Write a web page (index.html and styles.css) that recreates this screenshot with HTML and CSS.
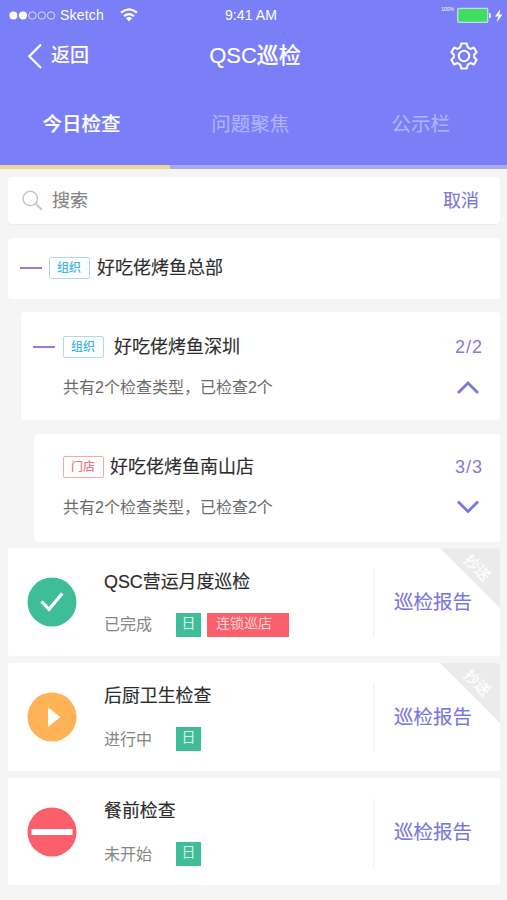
FILE: index.html
```html
<!DOCTYPE html>
<html lang="zh-CN">
<head>
<meta charset="utf-8">
<title>QSC巡检</title>
<link rel="stylesheet" href="styles.css">
</head>
<body>
<header class="header">
  <div class="status">
    <div class="carrier">
      <svg width="47" height="10" viewBox="0 0 47 10"><g fill="#fff"><circle cx="4.4" cy="5.5" r="4"/><circle cx="14" cy="5.5" r="4"/></g><g fill="none" stroke="#d9dafc" stroke-width="1"><circle cx="23.4" cy="5.5" r="3.7"/><circle cx="32.8" cy="5.5" r="3.7"/><circle cx="42" cy="5.5" r="3.7"/></g></svg>
      <span class="carrier-name">Sketch</span>
      <svg class="wifi" width="18" height="14" viewBox="0 0 18 14"><g fill="none" stroke="#fff" stroke-width="2.2"><path d="M1 4.7Q9-2 17 4.7"/><path d="M4 8.1Q9 4 14 8.1"/></g><path d="M5.9 10.3Q9 7.8 12.1 10.3L9 13.5Z" fill="#fff"/></svg>
    </div>
    <div class="clock">9:41 AM</div>
    <div class="power">
      <span class="percent">100%</span>
      <svg width="46" height="16" viewBox="0 0 46 16"><rect x="0.7" y="1.3" width="30" height="14" rx="1" fill="#42dc61" stroke="#c3d8f5" stroke-width="1.3"/><path d="M32 6h1.5q1 2.5 0 5H32Z" fill="#e8e9ff"/><path d="M43.4 2 38 9.5h3.3l-1.6 5.8L45.5 7.5h-3.3Z" fill="#fff"/></svg>
    </div>
  </div>
  <nav class="bar">
    <a class="back"><svg width="16" height="26" viewBox="0 0 16 26"><path d="M14 1.5 2.3 13.2 14 25" fill="none" stroke="#fff" stroke-width="2.2"/></svg><span>返回</span></a>
    <h1 class="title">QSC巡检</h1>
    <svg class="gear" width="28" height="28" viewBox="0 0 28 28" fill="none" stroke="#fff" stroke-width="2" stroke-linejoin="round"><path d="M11.2 1.5h5.6l1 3.9 2.7 1.6 3.4-1.5 2.7 4.8-2.5 2.4v2.6l2.5 2.4-2.7 4.8-3.4-1.5-2.7 1.6-1 3.9h-5.6l-1-3.9-2.7-1.6-3.4 1.5-2.7-4.8 2.5-2.4v-2.6L1.4 10.3l2.7-4.8 3.4 1.5 2.7-1.6Z"/><circle cx="14" cy="14" r="5.2"/></svg>
  </nav>
  <div class="tabs">
    <a class="tab active">今日检查</a>
    <a class="tab">问题聚焦</a>
    <a class="tab">公示栏</a>
  </div>
</header>

<main class="content">
  <div class="search">
    <svg width="22" height="22" viewBox="0 0 22 22" fill="none" stroke="#c6c6c6"><circle cx="8.3" cy="8.5" r="7.2" stroke-width="1.4"/><path d="m13.6 13.7 6.4 6" stroke-width="1.9"/></svg>
    <span class="placeholder">搜索</span>
    <a class="cancel">取消</a>
  </div>

  <section class="org root">
    <div class="org-head"><i class="dash"></i><span class="tag">组织</span><h2>好吃佬烤鱼总部</h2></div>
  </section>

  <section class="org branch">
    <div class="org-head"><i class="dash"></i><span class="tag">组织</span><h2>好吃佬烤鱼深圳</h2><span class="count">2/2</span></div>
    <div class="org-sub"><p>共有2个检查类型，已检查2个</p><svg width="24" height="14" viewBox="0 0 24 14"><path d="M2 13 12 3 22 13"/></svg></div>
  </section>

  <section class="org store">
    <div class="org-head"><span class="tag red">门店</span><h2>好吃佬烤鱼南山店</h2><span class="count">3/3</span></div>
    <div class="org-sub"><p>共有2个检查类型，已检查2个</p><svg width="24" height="14" viewBox="0 0 24 14"><path d="M2 1.5 12 11.5 22 1.5"/></svg></div>
  </section>

  <div class="tasks">
    <article class="task">
      <svg class="state" width="50" height="50" viewBox="0 0 50 50"><circle cx="25" cy="25" r="24.5" fill="#3fbd99"/><path d="m14.5 24.5 7.5 7.8 13.3-15.8" fill="none" stroke="#fff" stroke-width="3.2"/></svg>
      <div class="info"><h3>QSC营运月度巡检</h3><div class="meta"><span class="label">已完成</span><span class="chip">日</span><span class="chip wide">连锁巡店</span></div></div>
      <a class="report">巡检报告</a>
      <div class="ribbon"><span>抄送</span></div>
    </article>
    <article class="task">
      <svg class="state" width="50" height="50" viewBox="0 0 50 50"><circle cx="25" cy="25" r="24.5" fill="#ffb256"/><path d="M21 15.5 33.3 25 21 35Z" fill="#fff"/></svg>
      <div class="info"><h3>后厨卫生检查</h3><div class="meta"><span class="label">进行中</span><span class="chip">日</span></div></div>
      <a class="report">巡检报告</a>
      <div class="ribbon"><span>抄送</span></div>
    </article>
    <article class="task">
      <svg class="state" width="50" height="50" viewBox="0 0 50 50"><circle cx="25" cy="25" r="24.5" fill="#fa5f6b"/><path d="M4.5 22h41v6h-41Z" fill="#fff"/></svg>
      <div class="info"><h3>餐前检查</h3><div class="meta"><span class="label">未开始</span><span class="chip">日</span></div></div>
      <a class="report">巡检报告</a>
    </article>
  </div>
</main>
</body>
</html>
```

FILE: styles.css
```css
* { box-sizing: border-box; margin: 0; padding: 0; }
body {
  height: 900px;
  overflow: hidden;
  background: #f5f5f5;
  color: #333;
  font-family: "Liberation Sans", "Noto Sans CJK SC", sans-serif;
}
svg { display: block; flex: none; }
h1, h2, h3 { font-weight: 400; }

.header { height: 169px; background: #7b7ff7; color: #fff; }
.status {
  display: grid;
  grid-template-columns: 1fr auto 1fr;
  height: 30px;
  padding: 0 4px 0 9px;
  align-items: center;
  font-size: 14px;
}
.carrier { display: flex; align-items: center; }
.carrier-name { margin-left: 4px; line-height: 28px; letter-spacing: 0.2px; }
.carrier-name, .clock { margin-top: -1px; }
.wifi { margin-left: 16px; }
.clock { line-height: 28px; padding-right: 10px; letter-spacing: 0.1px; }
.power { display: flex; justify-content: flex-end; align-items: center; gap: 3px; }
.percent { font-size: 5px; line-height: 8px; align-self: flex-start; margin-top: -2px; }

.bar {
  display: grid;
  grid-template-columns: 1fr auto 1fr;
  align-items: center;
  height: 52px;
  padding: 0 29px 0 27px;
}
.back { display: flex; align-items: center; gap: 8px; font-size: 19px; line-height: 26px; font-weight: 500; }
.title { font-size: 22px; line-height: 30px; font-weight: 500; padding-left: 5px; -webkit-text-stroke: 0.15px; }
.gear { justify-self: end; }

.tabs { display: grid; grid-template-columns: 170px 1fr 1fr; grid-template-rows: 87px; height: 87px; }
.tab {
  height: 87px;
  border-bottom: 4px solid #aaa8ee;
  padding-right: 7px;
  font-size: 19.5px;
  line-height: 84px;
  text-align: center;
  color: #b0b2fb;
  -webkit-text-stroke: 0.15px;
}
.tab:nth-child(2) { padding-right: 8px; }
.tab:nth-child(3) { padding-right: 4px; }
.tab.active { border-color: #edd595; color: #fff; font-weight: 500; }

.content { padding: 8px 7px 0 8px; }
.search {
  display: flex;
  align-items: center;
  height: 47px;
  padding: 0 21px 0 14px;
  border-radius: 4px;
  background: #fff;
  box-shadow: 0 1px 1px #ebebeb;
  font-size: 18px;
}
.search span, .search a { margin-top: -3px; -webkit-text-stroke: 0.15px; }
.placeholder { margin-left: 8px; color: #858585; }
.cancel { margin-left: auto; color: #7c78d6; }

.org { border-radius: 4px; background: #fff; }
.org-head { display: flex; align-items: center; height: 26px; }
.org-head h2 { font-size: 18px; line-height: 26px; color: #2d2d2d; -webkit-text-stroke: 0.15px; }
.dash { width: 22px; height: 2px; background: #8683dc; }
.tag {
  width: 41px;
  height: 22px;
  border: 1px solid #a9dcec;
  border-radius: 2px;
  padding-left: 7px;
  color: #3fb4e0;
  font-size: 12px;
  line-height: 21px;
  font-weight: 500;
}
.tag.red { border-color: #f8a7ae; color: #f4737e; }
.count { margin-left: auto; color: #827dd6; font-size: 18px; letter-spacing: 1px; }
.org-sub {
  display: flex;
  align-items: center;
  justify-content: space-between;
  height: 24px;
  margin-top: 16px;
  padding-right: 3px;
  color: #6b6b6b;
  font-size: 16px;
}
.org-sub p { margin-top: -3px; }
.org-sub path { fill: none; stroke: #7b77d4; stroke-width: 2.8; }
.root { height: 61px; margin-top: 14px; padding: 17px 12px; }
.root .tag { margin: 0 7px; }
.branch { height: 108px; margin: 13px 0 0 13px; padding: 22px 17px 0 12px; }
.branch .tag { margin: 0 10px 0 8px; }
.branch .org-sub { padding-left: 30px; margin-top: 15px; }
.store { height: 108px; margin: 14px 0 0 26px; padding: 20px 17px 0 29px; }
.store .tag { margin-right: 6px; }
.store .org-sub { margin-top: 15px; }

.tasks { display: grid; gap: 7px; margin-top: 6.3px; }
.task {
  position: relative;
  display: grid;
  grid-template-columns: 96px 269px 1fr;
  align-items: center;
  height: 107.7px;
  border-radius: 3px;
  background: #fff;
  overflow: hidden;
}
.state { margin-left: 19px; }
.info { display: grid; gap: 18px; padding-top: 3px; }
.info h3 { font-size: 17.9px; line-height: 26px; color: #2b2b2b; -webkit-text-stroke: 0.15px; }
.meta { display: flex; align-items: center; height: 24px; margin-bottom: 2px; }
.label { width: 72px; margin-top: -3px; color: #858585; font-size: 16px; }
.chip {
  width: 25px;
  height: 24px;
  margin-right: 6px;
  background: #3fbd99;
  color: #d8f5e9;
  font-size: 14px;
  line-height: 21px;
  text-align: center;
}
.chip.wide { width: 82px; padding-left: 9px; background: #fa5f6b; color: #ffd6d8; text-align: left; }
.report {
  height: 68px;
  margin-top: 2px;
  border-left: 2px solid #f5f5f5;
  padding-left: 19px;
  color: #7a77dc;
  font-size: 19.5px;
  line-height: 66px;
  -webkit-text-stroke: 0.15px;
}
.ribbon {
  position: absolute;
  top: 0;
  right: 0;
  width: 60px;
  height: 60px;
  background: #ebebeb;
  clip-path: polygon(0 0, 100% 0, 100% 100%);
}
.ribbon span {
  position: absolute;
  top: 8px;
  right: 8px;
  color: #fff;
  font-size: 15px;
  line-height: 24px;
  font-weight: 500;
  transform: rotate(45deg);
}
```
